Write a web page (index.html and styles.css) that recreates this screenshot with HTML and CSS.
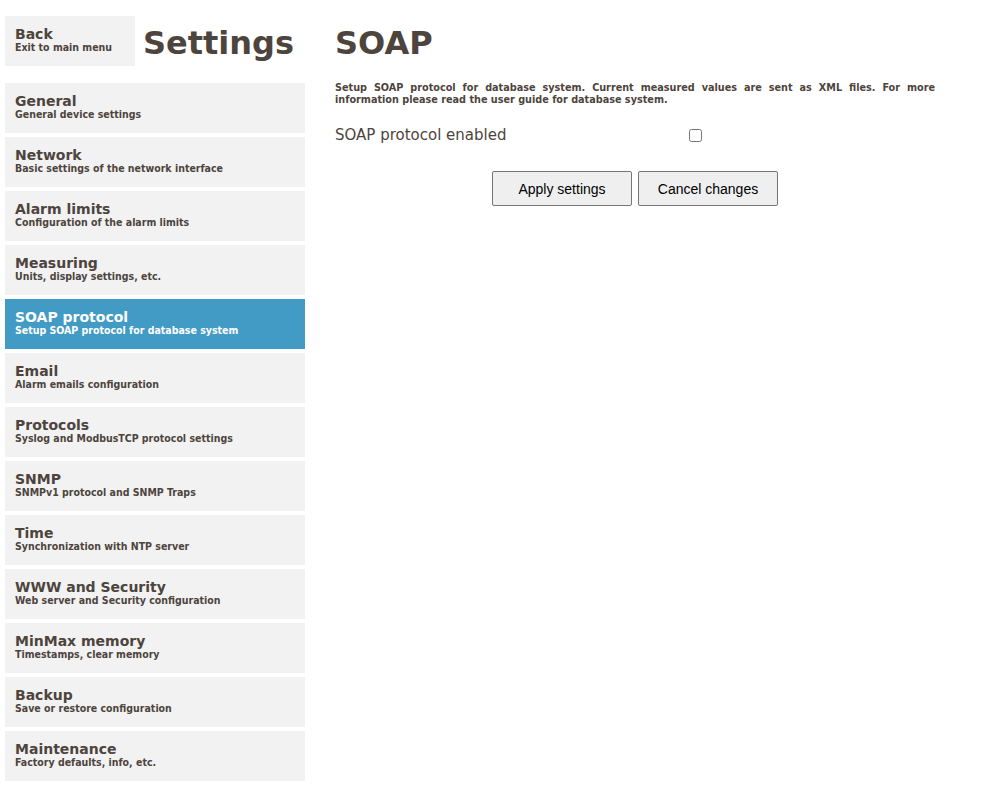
FILE: index.html
```html
<!DOCTYPE html>
<html lang="en">
<head>
<meta charset="utf-8">
<title>Settings - SOAP</title>
<link rel="stylesheet" href="styles.css">
</head>
<body>
<div class="page">
  <aside class="sidebar">
    <div class="top">
      <a class="back" href="#"><span class="t">Back</span><span class="s">Exit to main menu</span></a>
      <h1 class="title">Settings</h1>
    </div>
    <nav class="nav">
      <a class="item" href="#"><span class="t">General</span><span class="s">General device settings</span></a>
      <a class="item" href="#"><span class="t">Network</span><span class="s">Basic settings of the network interface</span></a>
      <a class="item" href="#"><span class="t">Alarm limits</span><span class="s">Configuration of the alarm limits</span></a>
      <a class="item" href="#"><span class="t">Measuring</span><span class="s">Units, display settings, etc.</span></a>
      <a class="item active" href="#"><span class="t">SOAP protocol</span><span class="s">Setup SOAP protocol for database system</span></a>
      <a class="item" href="#"><span class="t">Email</span><span class="s">Alarm emails configuration</span></a>
      <a class="item" href="#"><span class="t">Protocols</span><span class="s">Syslog and ModbusTCP protocol settings</span></a>
      <a class="item" href="#"><span class="t">SNMP</span><span class="s">SNMPv1 protocol and SNMP Traps</span></a>
      <a class="item" href="#"><span class="t">Time</span><span class="s">Synchronization with NTP server</span></a>
      <a class="item" href="#"><span class="t">WWW and Security</span><span class="s">Web server and Security configuration</span></a>
      <a class="item" href="#"><span class="t">MinMax memory</span><span class="s">Timestamps, clear memory</span></a>
      <a class="item" href="#"><span class="t">Backup</span><span class="s">Save or restore configuration</span></a>
      <a class="item" href="#"><span class="t">Maintenance</span><span class="s">Factory defaults, info, etc.</span></a>
    </nav>
  </aside>
  <main class="content">
    <h1 class="title">SOAP</h1>
    <p class="desc">Setup SOAP protocol for database system. Current measured values are sent as XML files. For more information please read the user guide for database system.</p>
    <div class="row">
      <label class="label" for="soap">SOAP protocol enabled</label>
      <input type="checkbox" id="soap" class="check">
    </div>
    <div class="buttons">
      <button class="btn" type="button">Apply settings</button>
      <button class="btn" type="button">Cancel changes</button>
    </div>
  </main>
</div>
</body>
</html>
```
FILE: styles.css
```css
html, body {
  margin: 0;
  padding: 0;
  background: #ffffff;
}
body {
  font-family: "DejaVu Sans", Verdana, sans-serif;
  color: #4d443d;
}
.page {
  display: flex;
  gap: 30px;
  padding: 16px 5px 0 5px;
}
.sidebar {
  width: 300px;
  flex: none;
}
.top {
  display: flex;
  gap: 8px;
  height: 50px;
}
.title {
  margin: 2px 0 0 0;
  font-size: 32px;
  line-height: 50px;
  font-weight: bold;
  color: #4d443d;
}
.back, .item {
  display: flex;
  flex-direction: column;
  box-sizing: border-box;
  height: 50px;
  padding: 11px 10px 0 10px;
  background: #f2f2f2;
  color: #4d443d;
  text-decoration: none;
}
.back {
  width: 130px;
}
.t {
  font-size: 14px;
  line-height: 15px;
  font-weight: bold;
}
.s {
  font-family: "DejaVu Sans Condensed", "DejaVu Sans", sans-serif;
  font-size: 10.5px;
  line-height: 11px;
  font-weight: bold;
}
.nav {
  display: flex;
  flex-direction: column;
  gap: 4px;
  margin-top: 17px;
}
.item.active {
  background: #429bc5;
  color: #ffffff;
}
.content {
  width: 600px;
  flex: none;
}
.desc {
  margin: 14px 0 0 0;
  font-family: "DejaVu Sans Condensed", "DejaVu Sans", sans-serif;
  font-size: 10.75px;
  line-height: 11.5px;
  font-weight: bold;
  text-align: justify;
}
.row {
  display: flex;
  align-items: center;
  height: 20px;
  margin-top: 20px;
}
.label {
  width: 350px;
  font-size: 15px;
  line-height: 20px;
}
.check {
  width: 13px;
  height: 13px;
  margin: 0 0 0 4px;
}
.buttons {
  display: flex;
  justify-content: center;
  gap: 6px;
  margin-top: 26px;
}
.btn {
  width: 140px;
  height: 35px;
  font-family: "Liberation Sans", Arial, sans-serif;
  font-size: 14px;
  color: #000000;
  background: #efefef;
  border: 1px solid #767676;
  border-radius: 2px;
}
```
